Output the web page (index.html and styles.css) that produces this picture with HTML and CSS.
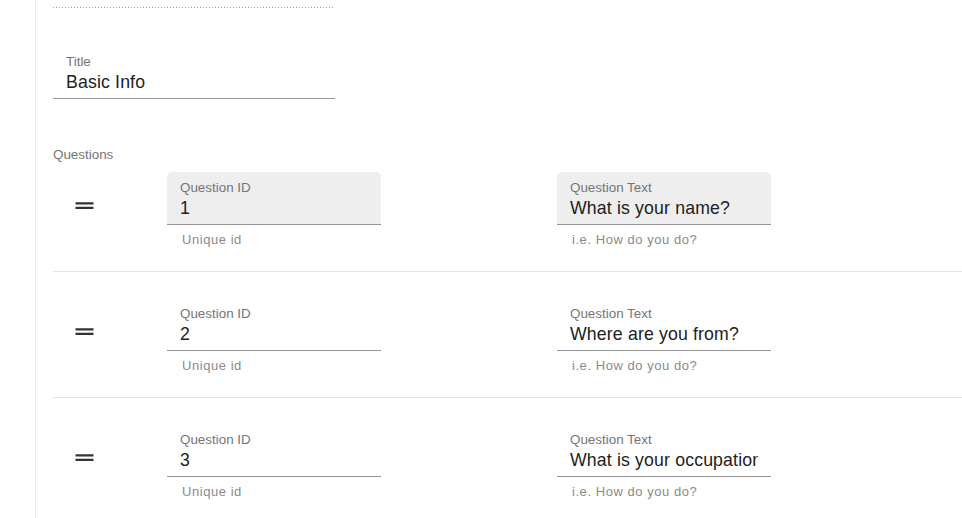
FILE: index.html
```html
<!DOCTYPE html>
<html lang="en">
<head>
    <meta charset="UTF-8">
    <meta name="viewport" content="width=device-width, initial-scale=1.0">
    <title>Survey section</title>
    <link rel="stylesheet" href="styles.css">
</head>
<body>
<div class="page">
    <div class="gutter"></div>
    <div class="card">
        <div class="disabled-line"></div>

        <div class="field title-field">
            <label class="field-label">Title</label>
            <div class="field-value">Basic Info</div>
        </div>

        <div class="section-label">Questions</div>

        <div class="questions">
            <div class="question">
                <svg class="handle" viewBox="0 0 24 24"><path d="M20 9H4v2h16V9zM4 15h16v-2H4v2z"/></svg>
                <div class="cell">
                    <div class="field filled">
                        <label class="field-label">Question ID</label>
                        <div class="field-value">1</div>
                    </div>
                    <div class="helper">Unique id</div>
                </div>
                <div class="cell">
                    <div class="field filled">
                        <label class="field-label">Question Text</label>
                        <div class="field-value">What is your name?</div>
                    </div>
                    <div class="helper">i.e. How do you do?</div>
                </div>
            </div>

            <div class="question">
                <svg class="handle" viewBox="0 0 24 24"><path d="M20 9H4v2h16V9zM4 15h16v-2H4v2z"/></svg>
                <div class="cell">
                    <div class="field">
                        <label class="field-label">Question ID</label>
                        <div class="field-value">2</div>
                    </div>
                    <div class="helper">Unique id</div>
                </div>
                <div class="cell">
                    <div class="field">
                        <label class="field-label">Question Text</label>
                        <div class="field-value">Where are you from?</div>
                    </div>
                    <div class="helper">i.e. How do you do?</div>
                </div>
            </div>

            <div class="question">
                <svg class="handle" viewBox="0 0 24 24"><path d="M20 9H4v2h16V9zM4 15h16v-2H4v2z"/></svg>
                <div class="cell">
                    <div class="field">
                        <label class="field-label">Question ID</label>
                        <div class="field-value">3</div>
                    </div>
                    <div class="helper">Unique id</div>
                </div>
                <div class="cell">
                    <div class="field">
                        <label class="field-label">Question Text</label>
                        <div class="field-value">What is your occupation?</div>
                    </div>
                    <div class="helper">i.e. How do you do?</div>
                </div>
            </div>
        </div>
    </div>
</div>
</body>
</html>
```

FILE: styles.css
```css
body {
    font-family: "Liberation Sans", Arial, sans-serif;
    margin: 0;
    padding: 0;
    background-color: #fff;
    color: #212121;
    overflow: hidden;
}
.page {
    display: flex;
    min-height: 518px;
}
.gutter {
    width: 35px;
    flex-shrink: 0;
}
.card {
    flex: 1;
    border-left: 1px solid #ececec;
    padding-left: 17px;
    min-height: 518px;
}
.disabled-line {
    width: 282px;
    height: 8px;
    background-image: linear-gradient(to right, #9e9e9e 33%, transparent 0%);
    background-size: 3px 1px;
    background-position: left bottom;
    background-repeat: repeat-x;
}
.field {
    width: 188px;
    height: 38px;
    padding: 8px 13px 6px;
    border-bottom: 1px solid #949494;
    border-radius: 5px 5px 0 0;
}
.field.filled {
    background-color: #eeeeee;
}
.title-field {
    width: 256px;
    margin-top: 38px;
}
.field-label {
    display: block;
    font-size: 13.4px;
    line-height: 15px;
    color: #757575;
}
.field-value {
    margin-top: 3px;
    font-size: 17.7px;
    line-height: 20px;
    letter-spacing: 0.15px;
    white-space: nowrap;
    overflow: hidden;
}
.section-label {
    margin-top: 48px;
    font-size: 13.4px;
    line-height: 15px;
    color: #757575;
}
.question {
    display: grid;
    grid-template-columns: 114px 390px 1fr;
    align-items: start;
    padding: 26px 0 24px;
    border-bottom: 1px solid #e4e4e4;
}
.question:first-child {
    padding-top: 10px;
}
.handle {
    width: 27px;
    height: 27px;
    margin: 20px 0 0 18px;
    fill: #333;
}
.helper {
    margin: 7px 0 0 15px;
    font-size: 13px;
    line-height: 15px;
    letter-spacing: 0.55px;
    color: #8a8a8a;
}
```
